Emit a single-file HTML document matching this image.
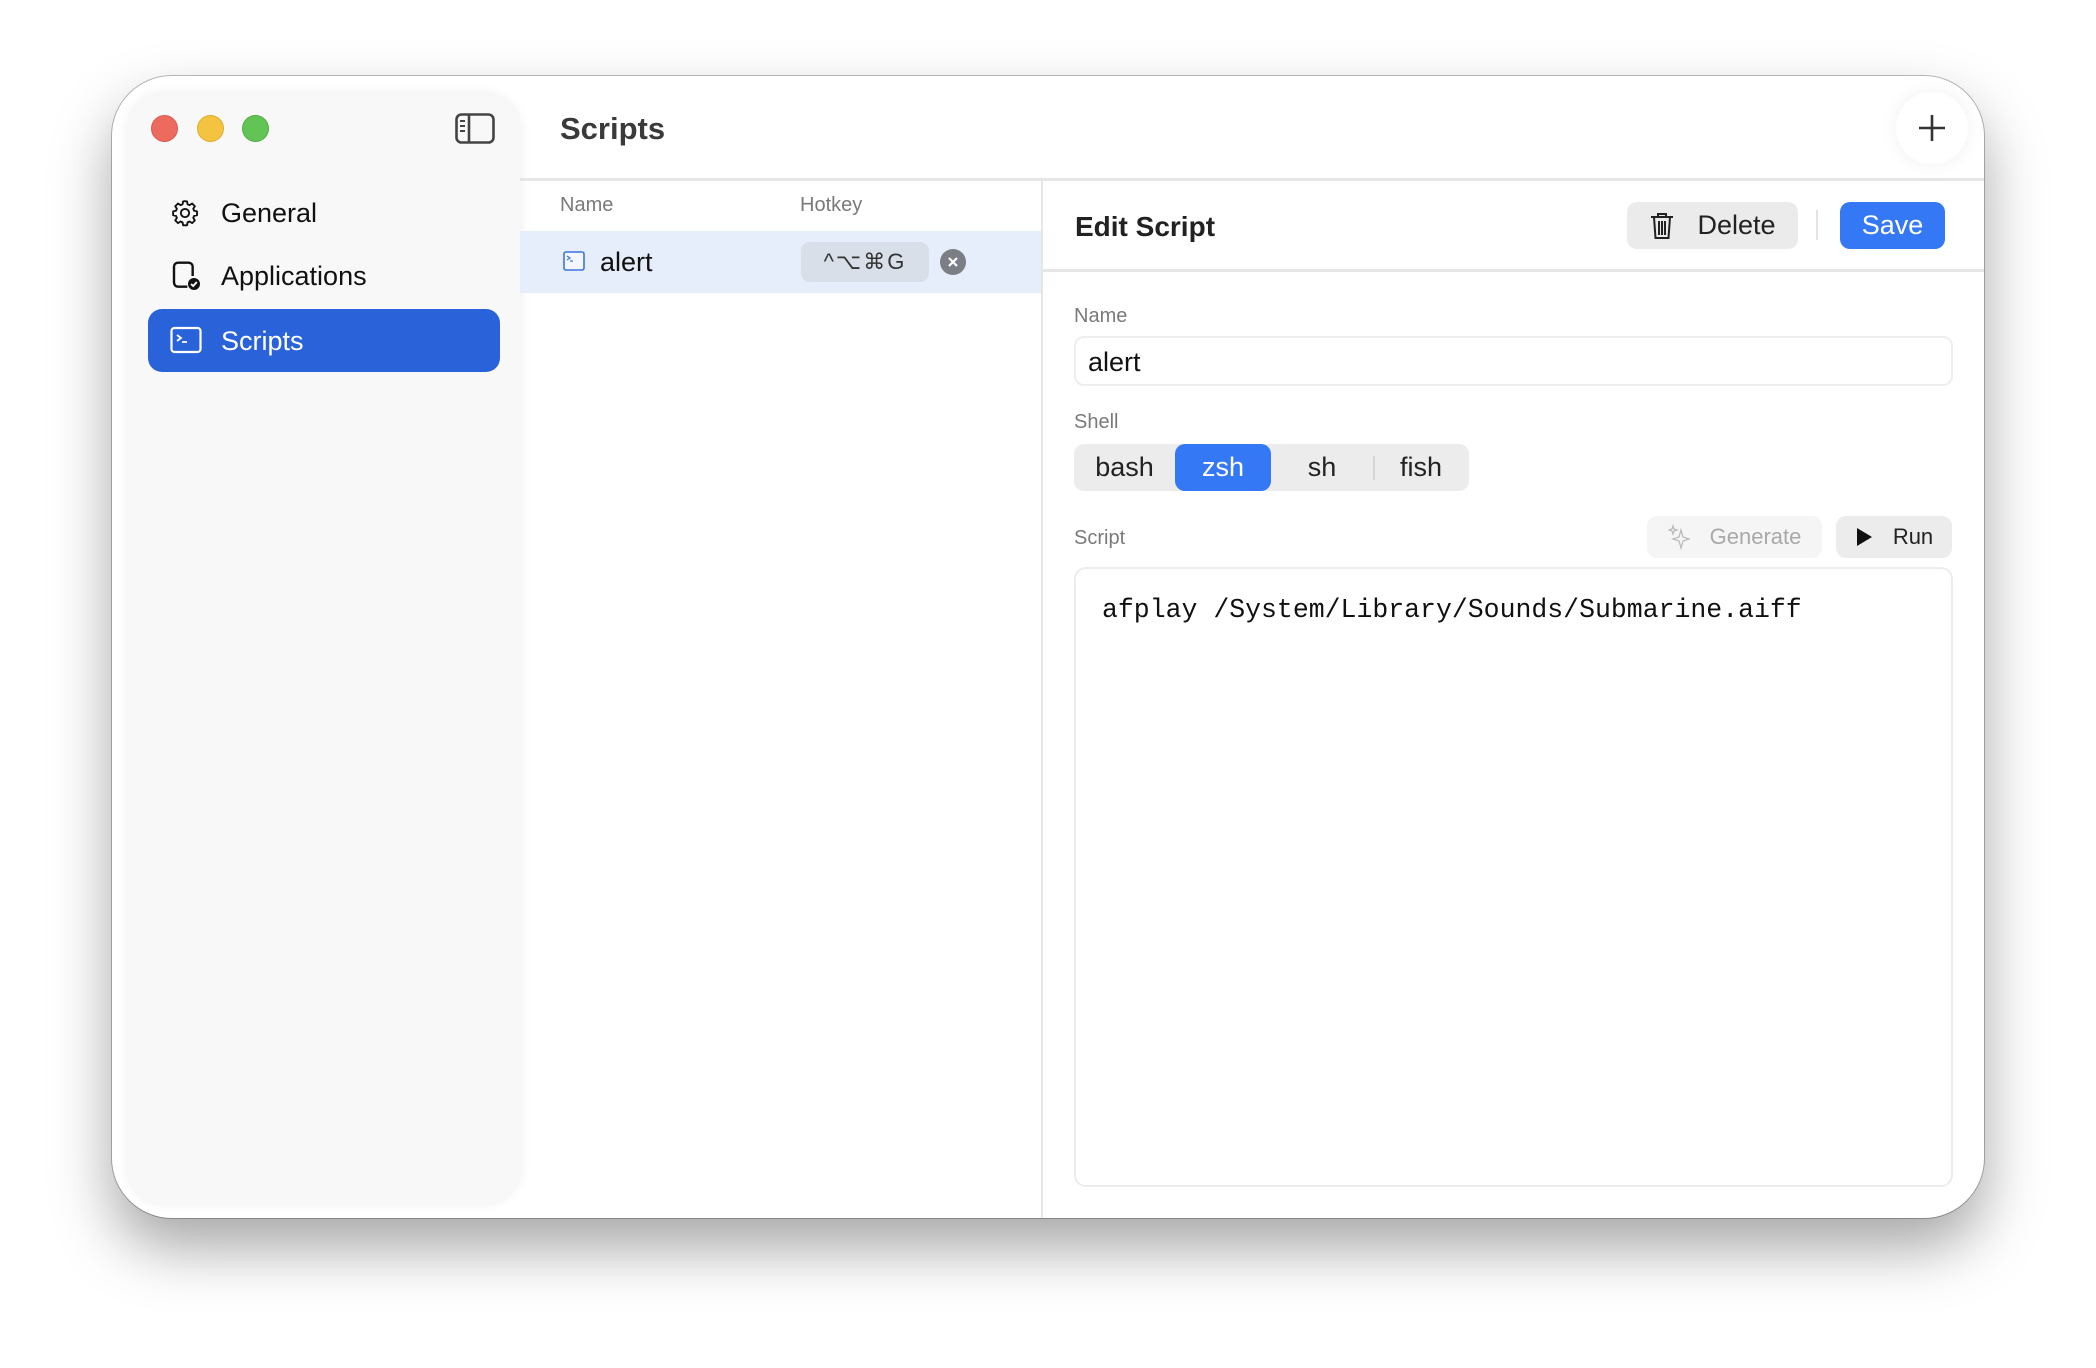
<!DOCTYPE html>
<html><head><meta charset="utf-8"><style>
*{box-sizing:border-box;margin:0;padding:0}
body{width:2096px;height:1368px;background:#fff;position:relative;overflow:hidden;font-family:"Liberation Sans",sans-serif;color:#1d1d1f}
.abs{position:absolute}
.win{left:112px;top:76px;width:1872px;height:1142px;border-radius:60px;background:#fff;box-shadow:0 30px 60px rgba(0,0,0,.35),0 0 0 1px rgba(0,0,0,.25);overflow:hidden}
.side{left:16px;top:18px;width:392px;height:1109px;border-radius:36px;background:#f8f8f8;box-shadow:0 0 12px rgba(0,0,0,.08),0 0 0 1px rgba(255,255,255,.9)}
.tl{width:27px;height:27px;border-radius:50%;top:21px}
.nav{left:93px;font-size:27px;color:#111;line-height:36px}
.lbl{font-size:20px;color:#7a7a7a}
.btn{border-radius:10px;font-size:27px;display:flex;align-items:center;justify-content:center}
</style></head><body>
<div class="abs win">
  <div class="abs side">
    <div class="abs tl" style="left:23px;background:#ed6a5e;border:1px solid #d55a50"></div>
    <div class="abs tl" style="left:69px;background:#f4c33f;border:1px solid #dcae30"></div>
    <div class="abs tl" style="left:114px;background:#61c454;border:1px solid #52ad46"></div>
    <svg class="abs" style="left:327px;top:19px" width="40" height="31" viewBox="0 0 40 31"><rect x="1.5" y="1.5" width="37" height="28" rx="5" fill="none" stroke="#444" stroke-width="2.6"/><line x1="14" y1="2" x2="14" y2="29" stroke="#444" stroke-width="2.6"/><line x1="5" y1="8" x2="10" y2="8" stroke="#444" stroke-width="2"/><line x1="5" y1="13" x2="10" y2="13" stroke="#444" stroke-width="2"/><line x1="5" y1="18" x2="10" y2="18" stroke="#444" stroke-width="2"/></svg>
    <svg class="abs" style="left:42px;top:104px" width="30" height="30" viewBox="0 0 24 24"><path d="M12 2.5l1.6.2.5 2.3 1.6.7 2-1.3 2.2 2.2-1.3 2 .7 1.6 2.3.5v3.1l-2.3.5-.7 1.6 1.3 2-2.2 2.2-2-1.3-1.6.7-.5 2.3h-3.1l-.5-2.3-1.6-.7-2 1.3-2.2-2.2 1.3-2-.7-1.6-2.3-.5v-3.1l2.3-.5.7-1.6-1.3-2 2.2-2.2 2 1.3 1.6-.7.5-2.3z" fill="none" stroke="#111" stroke-width="1.5" stroke-linejoin="round"/><circle cx="12" cy="12" r="3.3" fill="none" stroke="#111" stroke-width="1.5"/></svg>
    <div class="abs nav" style="top:101px">General</div>
    <svg class="abs" style="left:42px;top:166px" width="32" height="32" viewBox="0 0 24 24"><path d="M13 20H6a3 3 0 0 1-3-3V5a3 3 0 0 1 3-3h8a3 3 0 0 1 3 3v7" fill="none" stroke="#111" stroke-width="1.8"/><circle cx="18" cy="18" r="4.5" fill="#111"/><path d="M15.8 18l1.6 1.5 2.7-3" fill="none" stroke="#fff" stroke-width="1.4"/></svg>
    <div class="abs nav" style="top:164px">Applications</div>
    <div class="abs" style="left:20px;top:215px;width:352px;height:63px;border-radius:14px;background:#2a63d9"></div>
    <svg class="abs" style="left:42px;top:232px" width="32" height="28" viewBox="0 0 32 28"><rect x="1.5" y="2" width="29" height="24" rx="3" fill="none" stroke="#fff" stroke-width="2.2"/><path d="M7 9l4 3-4 3M12 16h5" fill="none" stroke="#fff" stroke-width="1.8"/></svg>
    <div class="abs nav" style="top:229px;color:#fff">Scripts</div>
  </div>
  <div class="abs" style="left:448px;top:35px;font-size:31px;font-weight:bold;color:#3a3a3a">Scripts</div>
  <div class="abs" style="left:1784px;top:16px;width:72px;height:72px;border-radius:50%;background:#fff;box-shadow:0 0 20px rgba(0,0,0,.06)"></div>
  <svg class="abs" style="left:1805px;top:37px" width="30" height="30" viewBox="0 0 30 30"><path d="M15 2v26M2 15h26" stroke="#333" stroke-width="2.6"/></svg>
  <div class="abs" style="left:408px;top:102px;width:1464px;height:3px;background:#e6e6e6"></div>
  <div class="abs" style="left:929px;top:104px;width:2px;height:1040px;background:#e6e6e6"></div>
  <div class="abs lbl" style="left:448px;top:118px">Name</div>
  <div class="abs lbl" style="left:688px;top:118px">Hotkey</div>
  <div class="abs" style="left:408px;top:155px;width:521px;height:62px;background:#e6edfb"></div>
  <svg class="abs" style="left:451px;top:175px" width="22" height="20" viewBox="0 0 22 20"><rect x="1" y="1" width="20" height="18" rx="2" fill="#f4f7ff" stroke="#3c74e0" stroke-width="1.6"/><path d="M4 5l3 2-3 2M7 10h3" fill="none" stroke="#3c74e0" stroke-width="1.2"/></svg>
  <div class="abs" style="left:488px;top:171px;font-size:27px;color:#111">alert</div>
  <div class="abs" style="left:689px;top:166px;width:128px;height:40px;border-radius:9px;background:#d9dfe9;font-size:22px;color:#333;display:flex;align-items:center;justify-content:center;letter-spacing:2px;font-family:'Liberation Sans','DejaVu Sans',sans-serif">^⌥⌘G</div>
  <div class="abs" style="left:828px;top:173px;width:26px;height:26px;border-radius:50%;background:#7b7e84"></div>
  <svg class="abs" style="left:828px;top:173px" width="26" height="26"><path d="M9 9l8 8M17 9l-8 8" stroke="#fff" stroke-width="2.2"/></svg>
  <div class="abs" style="left:963px;top:135px;font-size:28px;font-weight:bold;color:#222">Edit Script</div>
  <div class="abs btn" style="left:1515px;top:126px;width:171px;height:47px;background:#ebebeb;color:#222">
    <svg width="26" height="30" viewBox="0 0 26 30" style="margin-right:22px"><path d="M2 6h22M9 6V3h8v3M5 6l1.5 21h13L21 6M10 10v14M13 10v14M16 10v14" fill="none" stroke="#222" stroke-width="2"/></svg>Delete</div>
  <div class="abs" style="left:1704px;top:134px;width:2px;height:30px;background:#e3e3e3"></div>
  <div class="abs btn" style="left:1728px;top:126px;width:105px;height:47px;background:#3478f6;color:#fff">Save</div>
  <div class="abs" style="left:929px;top:193px;width:943px;height:3px;background:#e6e6e6"></div>
  <div class="abs lbl" style="left:962px;top:229px">Name</div>
  <div class="abs" style="left:962px;top:260px;width:879px;height:50px;border-radius:10px;border:2px solid #eeeeee;font-size:27px;padding:9px 0 0 12px;color:#111">alert</div>
  <div class="abs lbl" style="left:962px;top:335px">Shell</div>
  <div class="abs" style="left:962px;top:368px;width:395px;height:47px;border-radius:10px;background:#ececec"></div>
  <div class="abs" style="left:1063px;top:368px;width:96px;height:47px;border-radius:10px;background:#3478f6"></div>
  <div class="abs" style="left:1261px;top:380px;width:2px;height:24px;background:#d4d4d4"></div>
  <div class="abs" style="left:962px;top:376px;width:101px;text-align:center;font-size:27px;color:#222">bash</div>
  <div class="abs" style="left:1063px;top:376px;width:96px;text-align:center;font-size:27px;color:#fff">zsh</div>
  <div class="abs" style="left:1159px;top:376px;width:102px;text-align:center;font-size:27px;color:#222">sh</div>
  <div class="abs" style="left:1261px;top:376px;width:96px;text-align:center;font-size:27px;color:#222">fish</div>
  <div class="abs lbl" style="left:962px;top:451px">Script</div>
  <div class="abs btn" style="left:1535px;top:440px;width:175px;height:42px;background:#f5f5f5;color:#a9a9a9;font-size:22px">
    <svg width="22" height="26" viewBox="0 0 22 26" style="margin-right:20px"><path d="M13 6l2 7 6 2-6 2-2 7-2-7-6-2 6-2zM5 2l1 3 3 1-3 1-1 3-1-3-3-1 3-1z" fill="none" stroke="#bbb" stroke-width="1.3"/></svg>Generate</div>
  <div class="abs btn" style="left:1724px;top:440px;width:116px;height:42px;background:#ececec;color:#222;font-size:22px">
    <svg width="18" height="20" viewBox="0 0 18 20" style="margin-right:20px"><path d="M2 1l15 9-15 9z" fill="#111"/></svg>Run</div>
  <div class="abs" style="left:962px;top:491px;width:879px;height:620px;border-radius:12px;border:2px solid #ececec"></div>
  <div class="abs" style="left:990px;top:519px;font-family:'Liberation Mono',monospace;font-size:26.5px;color:#111;white-space:pre">afplay /System/Library/Sounds/Submarine.aiff</div>
</div>
</body></html>
